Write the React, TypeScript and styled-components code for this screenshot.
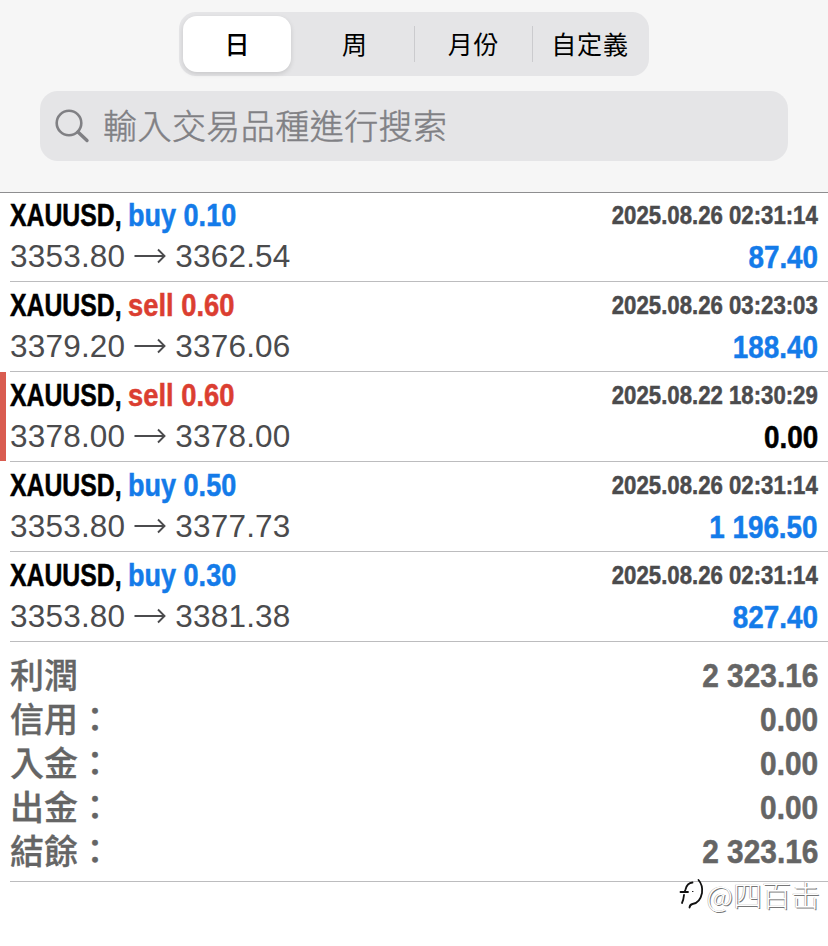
import React from "react";
import styled, { createGlobalStyle, css } from "styled-components";

type Deal = {
  side: "buy" | "sell";
  volume: string;
  open: string;
  close: string;
  time: string;
  profit: string;
  flat?: boolean;
};

const periods = ["日", "周", "月份", "自定義"];

const deals: Deal[] = [
  { side: "buy", volume: "0.10", open: "3353.80", close: "3362.54", time: "2025.08.26 02:31:14", profit: "87.40" },
  { side: "sell", volume: "0.60", open: "3379.20", close: "3376.06", time: "2025.08.26 03:23:03", profit: "188.40" },
  { side: "sell", volume: "0.60", open: "3378.00", close: "3378.00", time: "2025.08.22 18:30:29", profit: "0.00", flat: true },
  { side: "buy", volume: "0.50", open: "3353.80", close: "3377.73", time: "2025.08.26 02:31:14", profit: "1 196.50" },
  { side: "buy", volume: "0.30", open: "3353.80", close: "3381.38", time: "2025.08.26 02:31:14", profit: "827.40" },
];

const totals = [
  { label: "利潤", value: "2 323.16" },
  { label: "信用：", value: "0.00" },
  { label: "入金：", value: "0.00" },
  { label: "出金：", value: "0.00" },
  { label: "結餘：", value: "2 323.16" },
];

export default function App() {
  return (
    <Page>
      <GlobalStyle />
      <Header>
        <Segments>
          {periods.map((period, i) => (
            <Segment key={period} $active={i === 0} $divider={i > 1}>
              {period}
            </Segment>
          ))}
        </Segments>
        <Search>
          <SearchIcon />
          <Placeholder>輸入交易品種進行搜索</Placeholder>
        </Search>
      </Header>
      <main>
        {deals.map((deal, i) => (
          <DealRow key={i} deal={deal} />
        ))}
        <Totals>
          {totals.map(({ label, value }) => (
            <TotalLine key={label}>
              <TotalLabel>{label}</TotalLabel>
              <TotalValue>{value}</TotalValue>
            </TotalLine>
          ))}
        </Totals>
      </main>
      <Watermark>
        <WatermarkLogo />
        <span>@四百击</span>
      </Watermark>
    </Page>
  );
}

function DealRow({ deal }: { deal: Deal }) {
  return (
    <Row $marked={deal.flat}>
      <Line>
        <Title>
          <Symbol>XAUUSD,</Symbol>
          <Action $side={deal.side}>
            {deal.side} {deal.volume}
          </Action>
        </Title>
        <Time>{deal.time}</Time>
      </Line>
      <Line>
        <Prices>
          <span>{deal.open}</span>
          <Arrow />
          <span>{deal.close}</span>
        </Prices>
        <Profit $flat={deal.flat}>{deal.profit}</Profit>
      </Line>
    </Row>
  );
}

function SearchIcon() {
  return (
    <svg width="36" height="36" viewBox="0 0 36 36" fill="none" stroke="#808084" strokeLinecap="round">
      <circle cx="15" cy="15" r="12.3" strokeWidth="2.6" />
      <path d="M24 24 L33 32.5" strokeWidth="3.4" />
    </svg>
  );
}

function Arrow() {
  return (
    <svg width="32" height="20" viewBox="0 0 32 20" fill="none" stroke="#4b4b4d" strokeWidth="1.9">
      <path d="M0.5 9 H30.5 M24 2.5 L30.5 9 L24 15.5" />
    </svg>
  );
}

function WatermarkLogo() {
  return (
    <svg width="28" height="34" viewBox="0 0 28 34" fill="none" stroke="#111" strokeLinecap="round">
      <path d="M14.5 5.5 Q9 6 7.5 12.5 L6.5 15 H2.5 M7 15 H10 M6 18 Q5.5 23 4 26" strokeWidth="1.8" />
      <path d="M20.5 3 Q25 8 24 16 Q22 26 14.5 27 Q12 27.5 11.5 30.5" strokeWidth="1.8" />
      <path d="M14.5 14.5 H15" strokeWidth="1" />
    </svg>
  );
}

const GlobalStyle = createGlobalStyle`
  body {
    margin: 0;
    background: #fff;
  }

  * {
    box-sizing: border-box;
  }
`;

const cjk = `"Noto Sans CJK TC", sans-serif`;

// narrow bold face, squeezed horizontally from the regular width
const condensed = css`
  font-family: "Liberation Sans", Arial, sans-serif;
  font-weight: 700;
  white-space: nowrap;
  -webkit-text-stroke: 0.5px currentColor;
`;

const Page = styled.div`
  position: relative;
  width: 828px;
  height: 946px;
  overflow: hidden;
  background: #fff;
`;

const Header = styled.header`
  display: flex;
  flex-direction: column;
  align-items: center;
  gap: 15px;
  height: 192px;
  padding-top: 12px;
  background: #f6f6f6;
  box-shadow: 0 1px 0 #8e8e90;
`;

const Segments = styled.nav`
  display: grid;
  grid-template-columns: 108px 123px 118px 115px;
  width: 470px;
  height: 64px;
  padding: 4px 2px 4px 4px;
  border-radius: 17px;
  background: #e5e5e7;
`;

const Segment = styled.div<{ $active: boolean; $divider: boolean }>`
  display: flex;
  align-items: center;
  justify-content: center;
  padding: 0 0 3px ${(p) => (p.$active || p.$divider ? "1px" : "5px")};
  font: 400 25px/36px ${cjk};
  letter-spacing: 0.8px;
  color: #000;
  background: linear-gradient(#cbcbce, #cbcbce) no-repeat 0 50% / ${(p) => (p.$divider ? "1px 36px" : "0 0")};
  ${(p) =>
    p.$active &&
    css`
      font-weight: 500;
      background: #fff;
      border-radius: 14px;
      box-shadow: 0 2px 5px rgba(0, 0, 0, 0.13);
    `}
`;

const Search = styled.div`
  display: flex;
  align-items: center;
  gap: 13px;
  width: 748px;
  height: 70px;
  padding-left: 14px;
  border-radius: 18px;
  background: #e5e5e7;
`;

const Placeholder = styled.span`
  padding-bottom: 3px;
  font: 300 34px/50px ${cjk};
  letter-spacing: 0.45px;
  color: #808084;
  -webkit-text-stroke: 0.5px currentColor;
`;

const Row = styled.section<{ $marked?: boolean }>`
  height: 90px;
  padding: 3px 10px 0;
  background: ${(p) => p.$marked && "linear-gradient(#d95c50, #d95c50) no-repeat 0 0 / 6px 89px,"}
    linear-gradient(#bcbcbe, #bcbcbe) no-repeat 10px 100% / 100% 1px;
`;

const Line = styled.div`
  display: flex;
  align-items: center;
  justify-content: space-between;
  height: 41px;
`;

const Title = styled.div`
  display: flex;
  font-size: 32px;
  line-height: 41px;
`;

const Symbol = styled.span`
  ${condensed}
  width: 118px;
  transform: scaleX(0.775);
  transform-origin: 0 50%;
`;

const Action = styled.span<{ $side: "buy" | "sell" }>`
  ${condensed}
  color: ${(p) => (p.$side === "buy" ? "#147be9" : "#db3e31")};
  transform: scaleX(${(p) => (p.$side === "buy" ? 0.845 : 0.855)});
  transform-origin: 0 50%;
`;

const Time = styled.span`
  ${condensed}
  font-size: 25.5px;
  line-height: 41px;
  color: #4b4b4d;
  transform: scaleX(0.87);
  transform-origin: 100% 50%;
`;

const Prices = styled.div`
  display: flex;
  align-items: center;
  gap: 9px;
  font: 400 31.5px/41px "Liberation Sans", Arial, sans-serif;
  letter-spacing: 0.2px;
  color: #4b4b4d;
`;

const Profit = styled.span<{ $flat?: boolean }>`
  ${condensed}
  padding-top: 1px;
  font-size: 32px;
  line-height: 41px;
  color: ${(p) => (p.$flat ? "#000" : "#147be9")};
  transform: scaleX(0.87);
  transform-origin: 100% 50%;
`;

const Totals = styled.section`
  height: 240px;
  margin-left: 10px;
  padding: 12px 10px 0 0;
  border-bottom: 1px solid #bcbcbe;
`;

const TotalLine = styled.div`
  display: flex;
  align-items: center;
  justify-content: space-between;
  height: 44px;
  color: #656565;
`;

const TotalLabel = styled.span`
  padding-bottom: 5px;
  font: 500 34px/40px ${cjk};
  -webkit-text-stroke: 0.3px currentColor;
`;

const TotalValue = styled.span`
  ${condensed}
  font-size: 33px;
  line-height: 44px;
  transform: scaleX(0.905);
  transform-origin: 100% 50%;
`;

const Watermark = styled.div`
  position: absolute;
  right: 8px;
  bottom: 32px;
  display: flex;
  align-items: center;
  gap: 1px;
  font: 300 29px/40px "Noto Sans CJK SC", sans-serif;
  color: #fff;
  text-shadow: 1px 1px 0 #777, -0.5px -0.5px 0 #aaa;
`;
